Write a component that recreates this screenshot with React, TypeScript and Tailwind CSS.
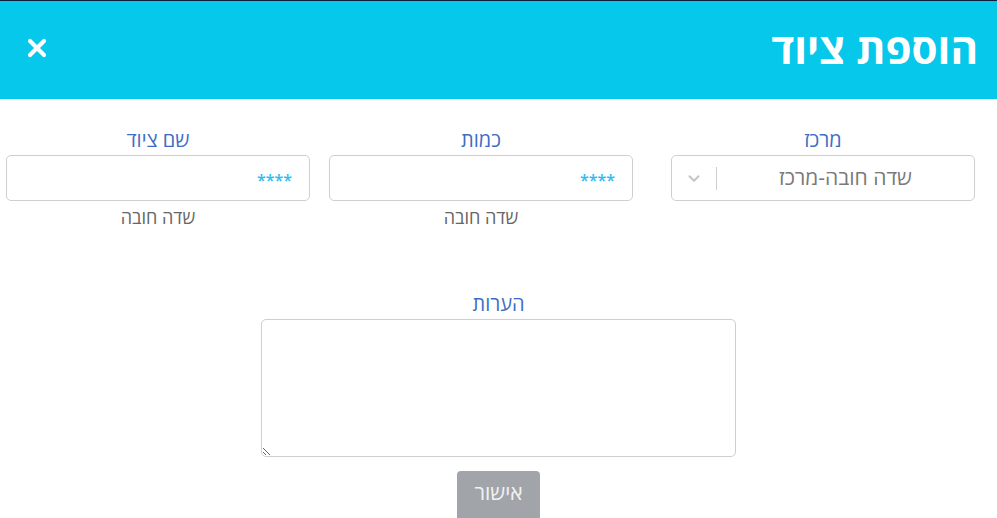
import React from 'react';

const font = { fontFamily: '"Open Sans", "Liberation Sans", "DejaVu Sans", sans-serif' };

function Field({ label, hint, children }: { label: string; hint?: string; children: React.ReactNode }) {
  return (
    <div className="w-[304px] shrink-0 flex flex-col items-center">
      <label className="text-[20px] leading-[26px] text-[#3d6ec5]">{label}</label>
      {children}
      {hint && <p className="mt-[4px] text-[18px] leading-[24px] text-[#666]">{hint}</p>}
    </div>
  );
}

export default function App() {
  return (
    <div dir="rtl" style={font} className="w-[997px] h-[518px] bg-[#6b6b6b] overflow-hidden border-t border-[#0d1e3e]">
      <div className="bg-white rounded-b-[10px] h-[540px]">
        {/* Header */}
        <div className="h-[98px] bg-[#06c8ea] flex items-center justify-between pr-[19px] pl-[27px]">
          <h1 className="text-[42px] font-bold text-white leading-none -mt-[4px]">הוספת ציוד</h1>
          <button className="w-[20px] h-[20px] -mt-[4px]">
            <svg viewBox="0 0 20 20" className="w-[20px] h-[20px]">
              <path d="M3 3 L17 17 M17 3 L3 17" stroke="white" strokeWidth="4.2" strokeLinecap="round" />
            </svg>
          </button>
        </div>

        {/* Top row of fields */}
        <div className="flex pr-[22px] pt-[28px]">
          <Field label="מרכז">
            <div className="mt-[2px] h-[46px] w-full border border-[#cfcfcf] rounded-[5px] flex items-center">
              <div className="flex-1 text-center text-[21px] text-[#7a7a7a]">שדה חובה-מרכז</div>
              <div className="w-px h-[23px] bg-[#cfcfcf]" />
              <div className="w-[44px] flex justify-center">
                <svg viewBox="0 0 20 20" className="w-[18px] h-[18px]">
                  <path d="M5 8 L10 13 L15 8" stroke="#c4c4c4" strokeWidth="2.2" fill="none" strokeLinecap="round" strokeLinejoin="round" />
                </svg>
              </div>
            </div>
          </Field>
          <div className="w-[38px] shrink-0" />
          <Field label="כמות" hint="שדה חובה">
            <div className="mt-[2px] h-[46px] w-full border border-[#cfcfcf] rounded-[5px] flex items-center pr-[17px]">
              <span className="text-[16px] font-semibold text-[#2bbcf0] pt-[4px]">****</span>
            </div>
          </Field>
          <div className="w-[19px] shrink-0" />
          <Field label="שם ציוד" hint="שדה חובה">
            <div className="mt-[2px] h-[46px] w-full border border-[#cfcfcf] rounded-[5px] flex items-center pr-[17px]">
              <span className="text-[16px] font-semibold text-[#2bbcf0] pt-[4px]">****</span>
            </div>
          </Field>
        </div>

        {/* Notes */}
        <div className="flex flex-col items-center mt-[62px]">
          <label className="text-[20px] leading-[26px] text-[#3d6ec5]">הערות</label>
          <textarea className="mt-[2px] w-[475px] h-[138px] border border-[#cfcfcf] rounded-[5px] outline-none" />
          <button className="mt-[14px] w-[83px] h-[50px] rounded-[4px] bg-[#a1a5aa] text-[21px] text-[#f2f2f2] pb-[6px]">
            אישור
          </button>
        </div>
      </div>
    </div>
  );
}
